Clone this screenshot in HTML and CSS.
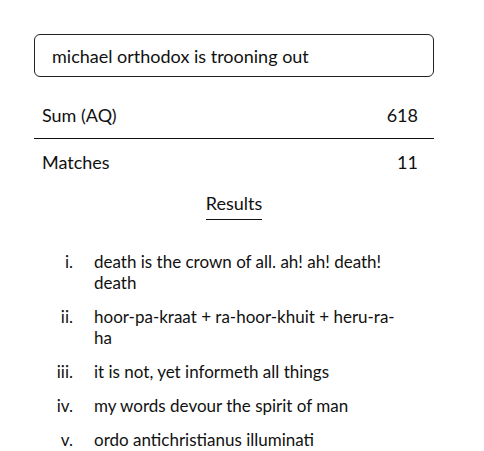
FILE: index.html
```html
<!doctype html>
<html>
  <head>
    <meta charset="utf-8">
    <meta name="viewport" content="width=device-width, initial-scale=1">
    <title>Gematria</title>
    <link rel="stylesheet" href="styles.css">
  </head>
  <body>
    <main class="calc">
      <input class="phrase" value="michael orthodox is trooning out">
      <div class="stats">
        <div class="stat">
          <span>Sum (AQ)</span>
          <span>618</span>
        </div>
        <div class="stat">
          <span>Matches</span>
          <span>11</span>
        </div>
      </div>
      <h2 class="results-title"><span>Results</span></h2>
      <ol class="results">
        <li>death is the crown of all. ah! ah! death! death</li>
        <li>hoor-pa-kraat + ra-hoor-khuit + heru-ra-ha</li>
        <li>it is not, yet informeth all things</li>
        <li>my words devour the spirit of man</li>
        <li>ordo antichristianus illuminati</li>
      </ol>
    </main>
  </body>
</html>
```

FILE: styles.css
```css
* {
  box-sizing: border-box;
}
body {
  margin: 0;
  font-family: Lato, "Noto Sans", sans-serif;
  font-size: 18px;
  color: #111;
  background: #fff;
}
.calc {
  width: 400px;
  margin-left: 34px;
  padding-top: 34px;
}
.phrase {
  display: block;
  width: 100%;
  height: 43px;
  padding: 0 17px;
  border: 1px solid #222;
  border-radius: 6px;
  font: inherit;
  color: inherit;
  outline: none;
}
.stats {
  margin-top: 15px;
}
.stat {
  display: flex;
  justify-content: space-between;
  padding: 13px 16px 13px 8px;
  line-height: 20px;
}
.stat + .stat {
  border-top: 1px solid #111;
}
.results-title {
  margin: 8px 0 0;
  text-align: center;
  font-size: 18px;
  font-weight: normal;
  line-height: 20px;
}
.results-title span {
  display: inline-block;
  padding-bottom: 6px;
  border-bottom: 1px solid #111;
}
.results {
  list-style: none;
  margin: 31px 0 0;
  padding: 0 29px 0 0;
  font-size: 17px;
  counter-reset: item;
}
.results li {
  display: flex;
  gap: 21px;
  margin-bottom: 13px;
  line-height: 21px;
  counter-increment: item;
}
.results li::before {
  content: counter(item, lower-roman) ".";
  flex: none;
  width: 39px;
  text-align: right;
}
```
